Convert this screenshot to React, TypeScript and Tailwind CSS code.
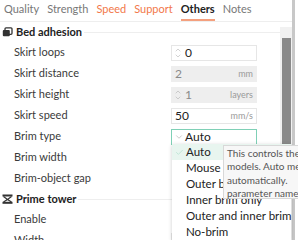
import { Check, ChevronDown, ChevronUp } from "lucide-react";

const font = { fontFamily: 'Lato, "Noto Sans", sans-serif' };

function Spinner() {
  return (
    <div className="flex flex-col items-center justify-center w-[8px] mr-[3px] text-[#a0a0a0]">
      <ChevronUp size={8} strokeWidth={1.4} className="-mb-[1px]" />
      <ChevronDown size={8} strokeWidth={1.4} className="-mt-[1px]" />
    </div>
  );
}

function Field({
  value,
  unit,
  spin,
  disabled,
}: {
  value: string;
  unit?: string;
  spin?: boolean;
  disabled?: boolean;
}) {
  return (
    <div
      className={
        "flex items-center w-[86px] h-[16px] px-[2px] border " +
        (disabled
          ? "bg-[#eeeeee] border-[#eeeeee] text-[#8a8a8a]"
          : "bg-white border-[#e6e6e6] text-[#222]")
      }
    >
      {spin && <Spinner />}
      <span className={"text-[12px] leading-none " + (spin ? "" : "pl-[1px]")}>
        {value}
      </span>
      {unit && (
        <span className="ml-auto pr-[1px] text-[9px] leading-none text-[#9a9a9a]">
          {unit}
        </span>
      )}
    </div>
  );
}

function Row({ label, children }: { label: string; children?: React.ReactNode }) {
  return (
    <div className="flex items-center h-[21px]">
      <div className="w-[171px] shrink-0 pl-[14px] text-[11px] text-[#3a3a3a]">{label}</div>
      {children}
    </div>
  );
}

function Header({ icon, title }: { icon: React.ReactNode; title: string }) {
  return (
    <div className="flex items-center h-[20px] pl-[2px]">
      {icon}
      <span className="ml-[3px] text-[11px] font-bold text-[#222]">{title}</span>
      <div className="flex-1 ml-[2px] h-px bg-[#eeeeee]" />
    </div>
  );
}

function CopyIcon() {
  return (
    <svg width="11" height="10" viewBox="0 0 11 10" className="text-[#333] shrink-0">
      <rect x="3" y="0.8" width="7" height="6.5" rx="1" fill="none" stroke="currentColor" strokeWidth="1.3" />
      <rect x="0.8" y="3" width="7" height="6.3" rx="1" fill="currentColor" />
    </svg>
  );
}

function TowerIcon() {
  return (
    <svg width="11" height="10" viewBox="0 0 11 10" className="text-[#333] shrink-0">
      <rect x="0.5" y="0.5" width="10" height="2" fill="currentColor" />
      <path d="M1.5 2.5 L5.5 5.5 L9.5 2.5 M1.5 8 L5.5 5.5 L9.5 8" fill="none" stroke="currentColor" strokeWidth="1.2" />
      <rect x="0.5" y="7.8" width="10" height="2" fill="currentColor" />
    </svg>
  );
}

export default function App() {
  const tabs = [
    { t: "Quality", c: "text-[#777]" },
    { t: "Strength", c: "text-[#777]" },
    { t: "Speed", c: "text-[#f2784b]" },
    { t: "Support", c: "text-[#f2784b]" },
    { t: "Others", c: "text-[#222] font-bold", active: true },
    { t: "Notes", c: "text-[#777]" },
  ];
  const options = ["Auto", "Mouse ear", "Outer brim only", "Inner brim only", "Outer and inner brim", "No-brim"];

  return (
    <div className="relative w-[298px] h-[240px] overflow-hidden bg-white" style={font}>
      <div className="flex h-[240px]">
        <div className="w-[292px] flex flex-col">
          <div className="flex items-end h-[22px] border-b border-[#eeeeee] pl-[4px] gap-[8px]">
            {tabs.map((tab) => (
              <div
                key={tab.t}
                className={
                  "text-[11px] leading-[18px] pb-[1px] border-b-2 " +
                  tab.c +
                  (tab.active ? " border-[#f4a07e]" : " border-transparent")
                }
              >
                {tab.t}
              </div>
            ))}
          </div>
          <div className="flex flex-1">
            <div className="w-[280px] flex flex-col">
              <Header icon={<CopyIcon />} title="Bed adhesion" />
              <Row label="Skirt loops">
                <Field value="0" spin />
              </Row>
              <Row label="Skirt distance">
                <Field value="2" unit="mm" disabled />
              </Row>
              <Row label="Skirt height">
                <Field value="1" unit="layers" spin disabled />
              </Row>
              <Row label="Skirt speed">
                <Field value="50" unit="mm/s" />
              </Row>
              <Row label="Brim type">
                <div className="flex items-center w-[86px] h-[16px] border border-[#7fd0b6] bg-white">
                  <ChevronDown size={10} strokeWidth={1.2} className="ml-[2px] text-[#999]" />
                  <span className="ml-[1px] text-[12px] leading-none text-[#222]">Auto</span>
                </div>
              </Row>
              <Row label="Brim width" />
              <Row label="Brim-object gap" />
              <Header icon={<TowerIcon />} title="Prime tower" />
              <Row label="Enable" />
              <Row label="Width">
                <Field value="12" unit="mm" />
              </Row>
            </div>
            <div className="w-[12px] bg-[#f1f1f1] mt-[5px] pl-[2px] pt-[11px]">
              <div className="w-[9px] h-[110px] bg-[#8a8a8a]" />
            </div>
          </div>
        </div>
        <div className="w-[3px] bg-[#c8c8c8]" />
        <div className="flex-1 bg-white" />
      </div>

      <div className="absolute left-[172px] top-[144px] w-[119px] bg-white shadow-[0_1px_4px_rgba(0,0,0,0.2)]">
        {options.map((o, i) => (
          <div
            key={o}
            className={"flex items-center h-[16px] " + (i === 0 ? "bg-[#e8f5ef]" : "")}
          >
            <div className="w-[14px] shrink-0 flex justify-center">
              {i === 0 && <Check size={9} strokeWidth={1.5} className="text-[#a6dcc6]" />}
            </div>
            <span className="text-[11.5px] leading-none text-[#222] whitespace-nowrap">{o}</span>
          </div>
        ))}
      </div>

      <div className="absolute left-[223px] top-[145px] w-[220px] h-[54px] bg-[#f7f7f7] border border-[#d8d8d8] px-[3px] pt-[1px] text-[10px] leading-[13.3px] text-[#555] whitespace-nowrap">
        <div>This controls the generation of brim at outer side of</div>
        <div>models. Auto means the brim width is analysed and</div>
        <div>automatically.</div>
        <div>parameter name</div>
      </div>
    </div>
  );
}
